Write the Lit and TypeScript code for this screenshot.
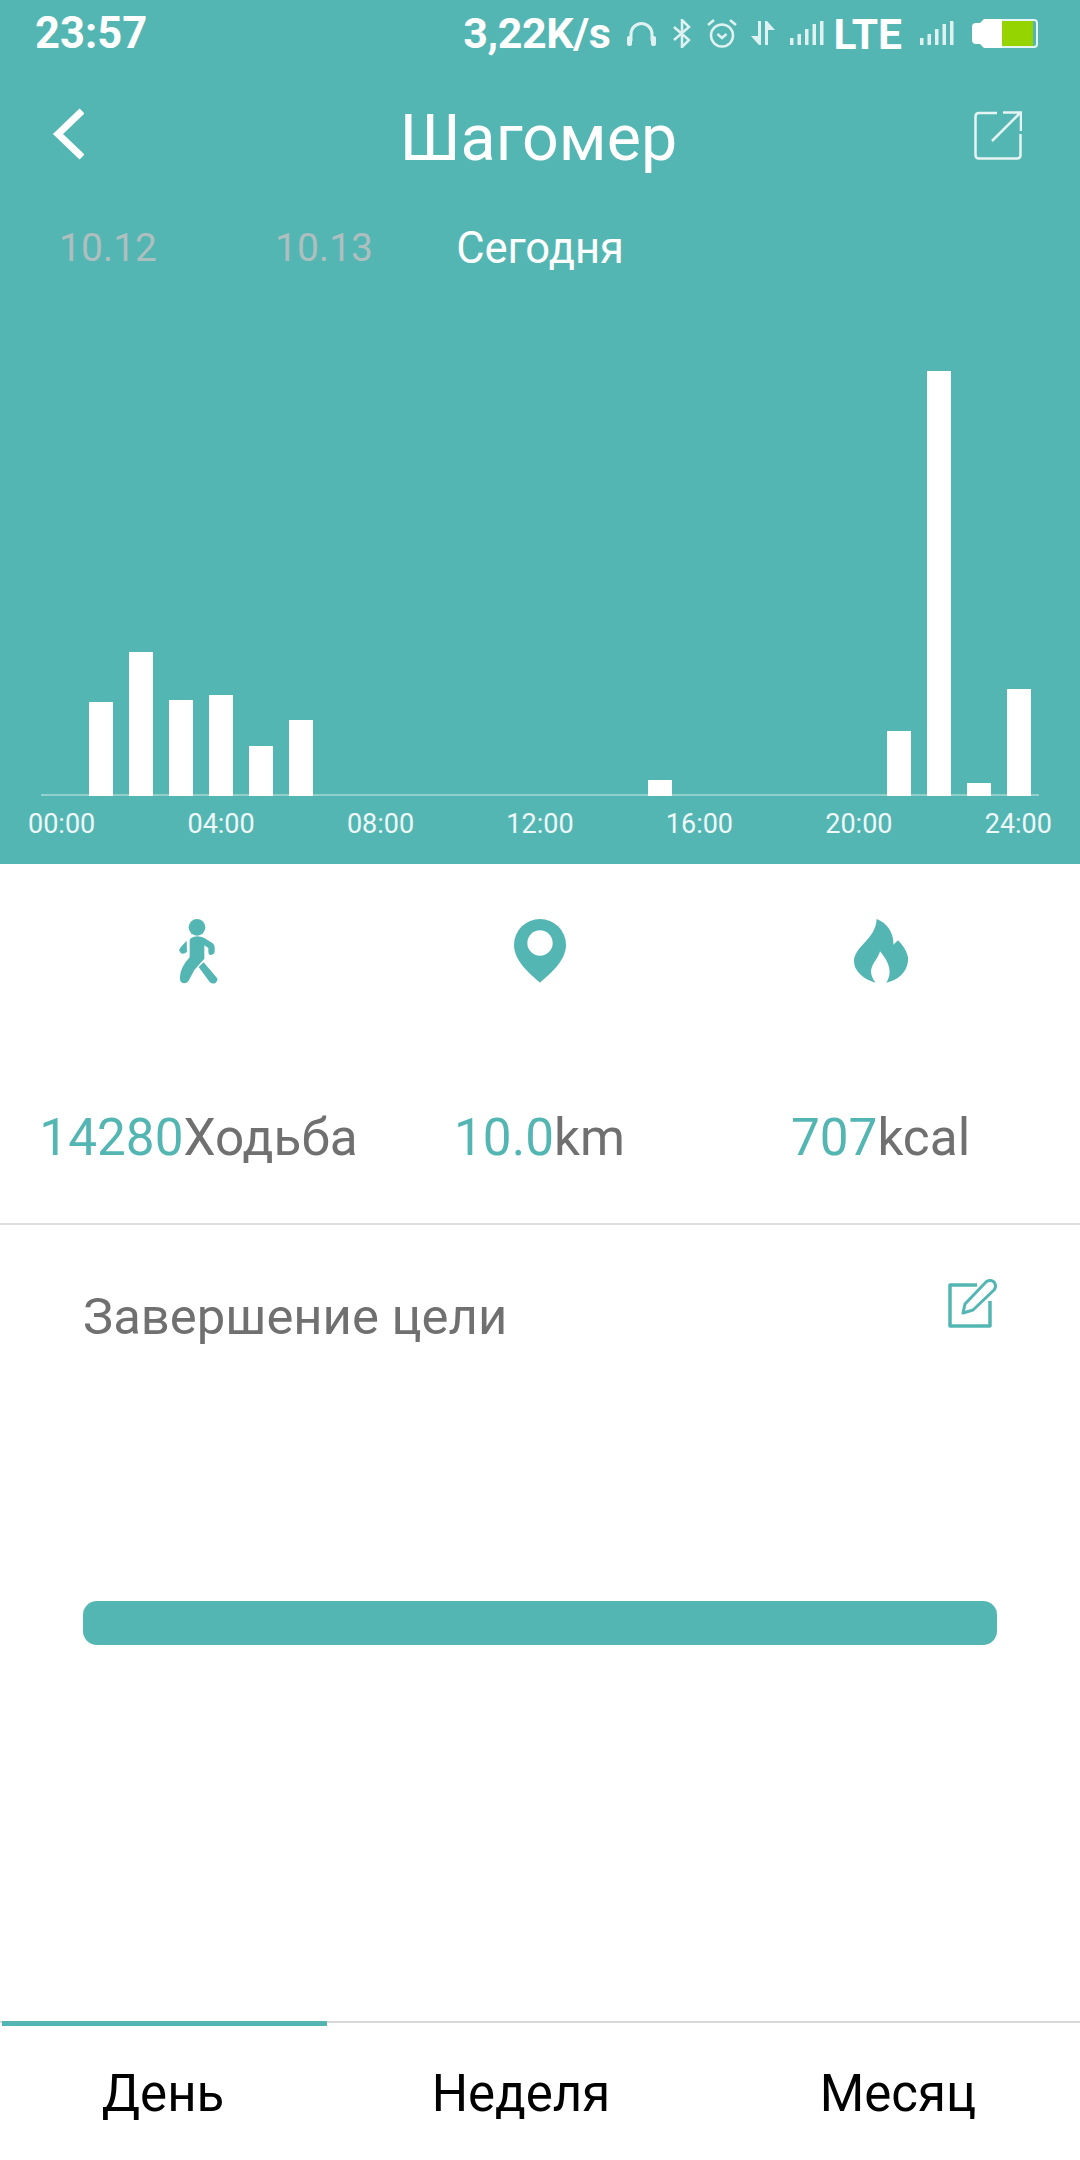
import { LitElement, css, html, svg } from "lit";
import { customElement } from "lit/decorators.js";

const TEAL = "#54b6b3";

// [left x, top y] of each bar in the hourly chart, bottom is the axis
const BARS: [number, number][] = [
  [89, 702],
  [129, 652],
  [169, 700],
  [209, 695],
  [249, 746],
  [289, 720],
  [648, 780],
  [887, 731],
  [927, 371],
  [967, 783],
  [1007, 689],
];
const CHART_TOP = 290;
const AXIS_Y = 796;

const HOURS = ["00:00", "04:00", "08:00", "12:00", "16:00", "20:00", "24:00"];

const signal = svg`
  <rect x="0" y="17" width="3.5" height="7" /><rect x="7.5" y="13" width="3.5" height="11" />
  <rect x="15" y="8" width="3.5" height="16" /><rect x="22.5" y="3" width="3.5" height="21" />
  <rect x="30" y="0" width="3.5" height="24" />`;

@customElement("app-root")
export class AppRoot extends LitElement {
  static override styles = css`
    :host {
      --teal: #54b6b3;
      display: block;
      width: 1080px;
      height: 2160px;
      background: #fff;
      font-family: Roboto, "Liberation Sans", sans-serif;
      overflow: hidden;
    }
    .top {
      height: 864px;
      background: var(--teal);
      color: #fff;
      display: flex;
      flex-direction: column;
    }
    .status {
      height: 66px;
      display: flex;
      align-items: center;
      padding: 0 42px 0 35px;
      font-weight: 700;
    }
    .clock {
      font-size: 43.500px;
      flex: 1;
    }
    .speed {
      font-size: 43px;
      letter-spacing: -0.4px;
    }
    .lte {
      font-size: 42.500px;
      margin: 4px 0 0 9px;
      line-height: 1;
    }
    .status svg {
      display: block;
      fill: #dff2f1;
    }
    .m14 {
      margin-left: 14px;
    }
    .m15 {
      margin-left: 15px;
    }
    .m16 {
      margin-left: 16px;
    }
    .m17 {
      margin-left: 17px;
    }
    .m18 {
      margin-left: 18px;
    }
    .header {
      height: 147px;
      display: grid;
      grid-template-columns: 1fr auto 1fr;
      align-items: start;
      padding: 0 58px 0 52px;
      box-sizing: border-box;
    }
    .back {
      display: block;
      margin-top: 42px;
    }
    .share {
      display: block;
      margin-top: 45px;
      justify-self: end;
    }
    .title {
      margin: 38px 0 0 3px;
      font-size: 64.500px;
      line-height: 68px;
    }
    .days {
      height: 70px;
      margin-bottom: 7px;
      display: grid;
      grid-template-columns: repeat(5, 216px);
      align-items: center;
      font-size: 39px;
      text-align: center;
    }
    .days span {
      color: #aebfbf;
    }
    .days .on {
      color: #fff;
      font-size: 43.5px;
    }
    .chart {
      display: block;
    }
    .hours {
      display: flex;
      justify-content: space-between;
      padding: 14px 28px 0 28px;
      font-size: 27px;
      line-height: 28px;
      color: #eef8f8;
    }
    .stats {
      height: 361px;
      box-sizing: border-box;
      border-bottom: 2px solid #dedede;
      display: grid;
      grid-template-columns: repeat(3, 341px);
      padding: 0 28px;
    }
    .stat {
      display: flex;
      flex-direction: column;
      align-items: center;
    }
    .stat-icon {
      height: 64px;
      margin-top: 55px;
    }
    .stat-icon svg {
      display: block;
      fill: var(--teal);
    }
    .stat-text {
      margin-top: 125px;
      font-size: 51.300px;
      line-height: 60px;
      color: #707070;
      white-space: nowrap;
    }
    .stat-text b {
      font-weight: 400;
      color: var(--teal);
    }
    .goal {
      height: 796px;
      box-sizing: border-box;
      padding: 55px 83px 0;
      display: flex;
      flex-direction: column;
    }
    .goal-head {
      display: flex;
      justify-content: space-between;
      align-items: flex-start;
      height: 321px;
    }
    .goal-title {
      margin-top: 7px;
      font-size: 50.800px;
      line-height: 60px;
      color: #707070;
    }
    .goal-head svg {
      display: block;
      margin-top: -1px;
    }
    .bar {
      height: 44px;
      border-radius: 14px;
      background: var(--teal);
    }
    .nav {
      height: 139px;
      position: relative;
      border-top: 2px solid #d8d8d8;
      box-sizing: border-box;
      display: grid;
      grid-template-columns: 326px 390px 1fr;
      font-size: 51px;
      color: #000;
      text-align: center;
      padding-top: 41px;
      line-height: 60px;
    }
    .nav::before {
      content: "";
      position: absolute;
      left: 2px;
      top: -2px;
      width: 325px;
      height: 5px;
      background: var(--teal);
    }
  `;

  protected override render() {
    const chartHeight = AXIS_Y - CHART_TOP;
    return html`
      <div class="top">
        <div class="status">
          <span class="clock">23:57</span>
          <span class="speed">3,22K/s</span>
          <svg class="m17" width="29" height="25" viewBox="0 0 29 25">
            <path d="M4 20V13a10.500 10.500 0 0 1 21 0v7" fill="none" stroke="#dff2f1" stroke-width="3" />
            <rect x="0" y="15" width="5" height="10" rx="2" /><rect x="24" y="15" width="5" height="10" rx="2" />
          </svg>
          <svg class="m17" width="18" height="29" viewBox="0 0 18 29">
            <path d="M1 8l15 13-7 7V1l7 7L1 21" fill="none" stroke="#dff2f1" stroke-width="2.500" />
          </svg>
          <svg class="m16" width="30" height="29" viewBox="0 0 30 29">
            <circle cx="15" cy="16.500" r="11" fill="none" stroke="#dff2f1" stroke-width="2.500" />
            <path d="M10.500 15l4.500 4 4.500-4" fill="none" stroke="#dff2f1" stroke-width="2.500" />
            <path d="M1 6l6-5M29 6l-6-5" fill="none" stroke="#dff2f1" stroke-width="2.500" />
          </svg>
          <svg class="m14" width="24" height="24" viewBox="0 0 24 24">
            <path d="M7 0h3v24h-2L0 15h7zM14 0h2l8 9h-7v15h-3z" />
          </svg>
          <svg class="m15" width="34" height="24" viewBox="0 0 34 24">${signal}</svg>
          <span class="lte">LTE</span>
          <svg class="m18" width="34" height="24" viewBox="0 0 34 24">${signal}</svg>
          <svg class="m18" width="66" height="29" viewBox="0 0 66 29">
            <path d="M12 0H30V29H12L8 25H4Q0 25 0 21V8Q0 4 4 4H8Z" fill="#fff" />
            <path d="M30 1H62Q65 1 65 4V25Q65 28 62 28H30" fill="none" stroke="#e4f5f2" stroke-width="2" />
            <rect x="30" y="2" width="31" height="25" fill="#96d400" />
          </svg>
        </div>
        <div class="header">
          <svg class="back" width="32" height="52" viewBox="0 0 32 52">
            <path d="M30 3L6 26l24 23" fill="none" stroke="#fff" stroke-width="7" />
          </svg>
          <span class="title">Шагомер</span>
          <svg class="share" width="48" height="49" viewBox="0 0 48 49">
            <path
              d="M23 2H5Q1.500 2 1.500 5.500V44Q1.500 47.500 5 47.500H43Q46.500 47.500 46.500 44V23"
              fill="none"
              stroke="#e6f5f4"
              stroke-width="2.500"
            />
            <path d="M18 30L46 2M29 1.500H47V20" fill="none" stroke="#e6f5f4" stroke-width="2.500" />
          </svg>
        </div>
        <div class="days">
          <span>10.12</span>
          <span>10.13</span>
          <span class="on">Сегодня</span>
        </div>
        <svg class="chart" width="1080" height=${chartHeight} viewBox="0 ${CHART_TOP} 1080 ${chartHeight}">
          <rect x="41" y=${AXIS_Y - 1.5} width="998" height="1" fill="#cfe9e8" />
          ${BARS.map(([x, y]) => svg`<rect x=${x} y=${y} width="24" height=${AXIS_Y - y} fill="#fff" />`)}
        </svg>
        <div class="hours">${HOURS.map((h) => html`<span>${h}</span>`)}</div>
      </div>

      <div class="stats">
        <div class="stat">
          <div class="stat-icon">
            <svg width="40" height="66" viewBox="116 85 120 198">
              <circle cx="170" cy="110" r="25" />
              <path d="M152 142Q170 132 192 142L217 158Q223 162 223 170V185Q220 194 210 193Q204 192 204 182V172L192 164V204L162 238L144 272Q134 282 122 274Q117 268 120 250Q124 226 148 200V148Z" />
              <path d="M139 150L119 172Q114 182 122 188Q130 192 140 184Z" />
              <path d="M175 229L190 215L230 262Q234 270 226 276Q218 282 208 274Z" />
            </svg>
          </div>
          <div class="stat-text"><b>14280</b>Ходьба</div>
        </div>
        <div class="stat">
          <div class="stat-icon">
            <svg width="52" height="64" viewBox="99 88 156 192">
              <path
                fill-rule="evenodd"
                d="M177 279C150 255 99 215 99 166A78 78 0 0 1 255 166C255 215 204 255 177 279ZM177 122A38 38 0 1 0 177 198A38 38 0 1 0 177 122Z"
              />
            </svg>
          </div>
          <div class="stat-text"><b>10.0</b>km</div>
        </div>
        <div class="stat">
          <div class="stat-icon">
            <svg width="54" height="64" viewBox="100 88 162 192">
              <path d="M168 88C200 100 220 130 218 165L232 152C255 175 265 200 262 215C258 250 230 272 197 279C215 250 208 220 178 185C172 215 130 235 165 279C130 270 100 245 100 215C100 170 165 150 168 88Z" />
            </svg>
          </div>
          <div class="stat-text"><b>707</b>kcal</div>
        </div>
      </div>

      <div class="goal">
        <div class="goal-head">
          <span class="goal-title">Завершение цели</span>
          <svg width="49" height="49" viewBox="0 0 49 49">
            <path d="M29 6H2V47H42V22" fill="none" stroke=${TEAL} stroke-width="3.500" stroke-linejoin="round" />
            <path
              d="M15 34L17 25L38 3Q42 0 46 3Q49 7 46 11L25 31L15 34Z"
              fill="none"
              stroke=${TEAL}
              stroke-width="3"
              stroke-linejoin="round"
            />
          </svg>
        </div>
        <div class="bar"></div>
      </div>

      <div class="nav">
        <span>День</span>
        <span>Неделя</span>
        <span>Месяц</span>
      </div>
    `;
  }
}
